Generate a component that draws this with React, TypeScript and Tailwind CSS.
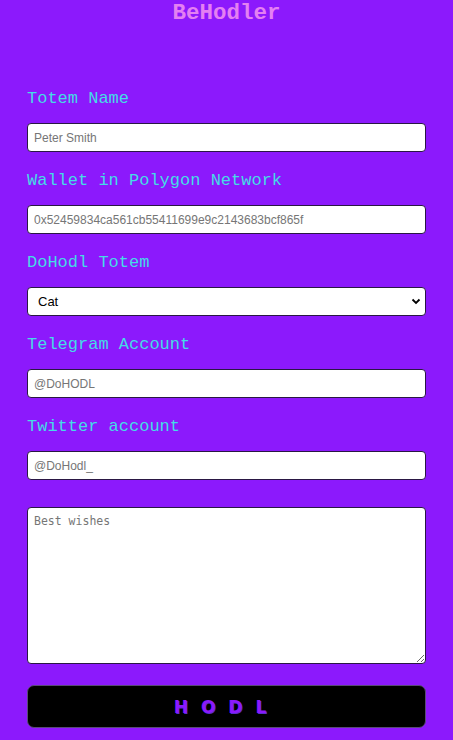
import React from "react";

const mono = { fontFamily: '"DejaVu Sans Mono", "Liberation Mono", monospace' };

function Label({ children }: { children: React.ReactNode }) {
  return (
    <label
      className="block h-[24px] leading-[24px] text-[17px] text-[#45dce6] mb-[12px]"
      style={{ fontFamily: '"Liberation Mono", monospace' }}
    >
      {children}
    </label>
  );
}

const inputCls =
  "block w-full h-[29px] bg-white border border-[#2a1744] rounded-[4px] px-[6px] text-[12px] text-black placeholder:text-[#767676] outline-none";

export default function App() {
  return (
    <div className="min-h-[740px] w-full bg-[#8c19fc] px-[27px] pb-[20px]" style={{ fontFamily: '"Liberation Sans", Arial, sans-serif' }}>
      <h1
        className="text-center text-[22.5px] font-bold leading-[26px] pt-0 text-[#e480f2] h-[87px]"
        style={{ fontFamily: '"Liberation Mono", monospace' }}
      >
        BeHodler
      </h1>
      <div className="mb-[17px]">
        <Label>Totem Name</Label>
        <input className={inputCls} placeholder="Peter Smith" />
      </div>
      <div className="mb-[17px]">
        <Label>Wallet in Polygon Network</Label>
        <input className={inputCls} placeholder="0x52459834ca561cb55411699e9c2143683bcf865f" />
      </div>
      <div className="mb-[17px]">
        <Label>DoHodl Totem</Label>
        <div className="relative">
          <select className={inputCls + " appearance-none pl-[10px] text-[13px]"} defaultValue="Cat">
            <option>Cat</option>
            <option>Dog</option>
          </select>
          <svg className="absolute right-[5px] top-[11px]" width="10" height="7" viewBox="0 0 10 7">
            <path d="M1.5 1.5 L5 5 L8.5 1.5" fill="none" stroke="#000" strokeWidth="1.8" />
          </svg>
        </div>
      </div>
      <div className="mb-[17px]">
        <Label>Telegram Account</Label>
        <input className={inputCls} placeholder="@DoHODL" />
      </div>
      <div className="mb-[27px]">
        <Label>Twitter account</Label>
        <input className={inputCls} placeholder="@DoHodl_" />
      </div>
      <textarea
        className="block w-full h-[157px] bg-white border border-[#2a1744] rounded-[4px] px-[6px] py-[5px] text-[11.5px] placeholder:text-[#767676] outline-none mb-[21px]"
        style={mono}
        placeholder="Best wishes"
      />
      <button
        className="block w-full h-[43px] bg-black border border-[#5a4a78] rounded-[7px] text-[17px] font-bold text-[#8c19fc] tracking-[13px] leading-[40px]"
        style={{ fontFamily: '"DejaVu Sans", Verdana, sans-serif', textShadow: "1px 1px 0 #5b2bd0" }}
      >
        HODL
      </button>
    </div>
  );
}
